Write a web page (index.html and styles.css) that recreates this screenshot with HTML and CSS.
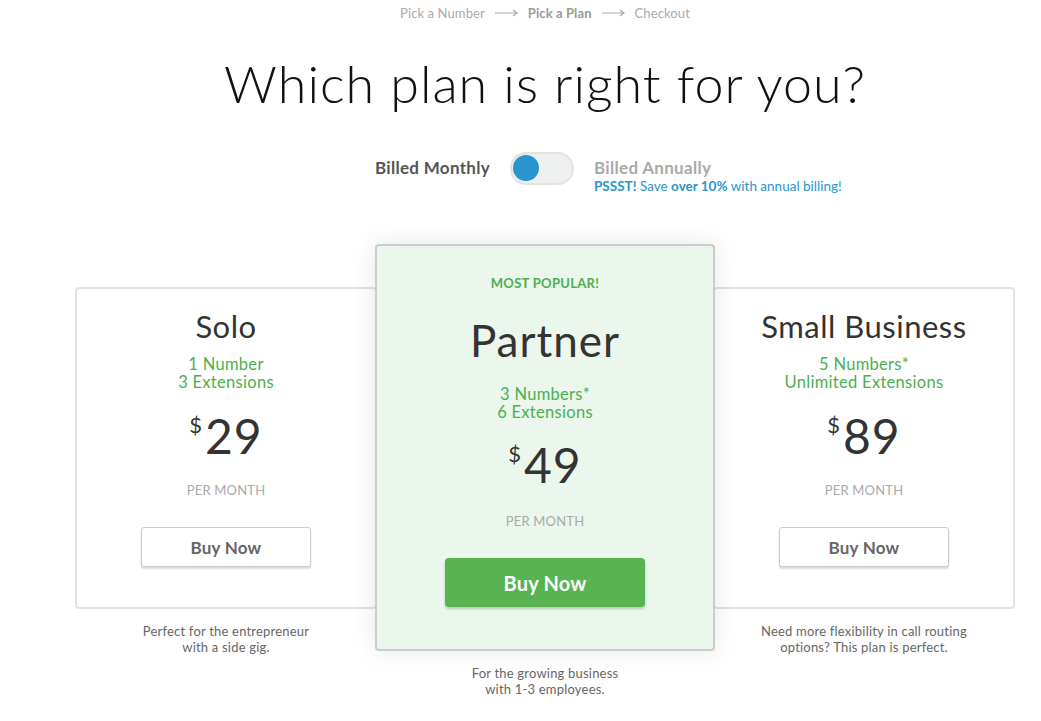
FILE: index.html
```html
<!DOCTYPE html>
<html lang="en">
<head>
  <meta charset="UTF-8">
  <title>Pick a Plan</title>
  <link rel="stylesheet" href="styles.css">
</head>
<body>

  <div class="page">
    <nav class="steps">
      <span>Pick a Number</span>
      <svg class="arrow" width="23" height="8" viewBox="0 0 23 8"><path d="M0 4H22M18 1L22 4L18 7" fill="none" stroke="#aaa" stroke-width="1.2"/></svg>
      <span class="current">Pick a Plan</span>
      <svg class="arrow" width="23" height="8" viewBox="0 0 23 8"><path d="M0 4H22M18 1L22 4L18 7" fill="none" stroke="#aaa" stroke-width="1.2"/></svg>
      <span>Checkout</span>
    </nav>

    <h1>Which plan is right for you?</h1>

    <div class="billing">
      <div class="label on">Billed Monthly</div>
      <div class="switch"><span class="knob"></span></div>
      <div class="annual">
        <div class="label">Billed Annually</div>
        <div class="psst"><b>PSSST!</b> Save <b>over 10%</b> with annual billing!</div>
      </div>
    </div>

    <div class="plans">
      <div class="col side">
        <div class="card">
          <h2>Solo</h2>
          <div class="features">1 Number<br>3 Extensions</div>
          <div class="price"><span class="cur">$</span>29</div>
          <div class="per">PER MONTH</div>
          <button class="buy">Buy Now</button>
        </div>
        <p class="desc">Perfect for the entrepreneur<br>with a side gig.</p>
      </div>

      <div class="col main">
        <div class="card featured">
          <div class="badge">MOST POPULAR!</div>
          <h2>Partner</h2>
          <div class="features">3 Numbers*<br>6 Extensions</div>
          <div class="price"><span class="cur">$</span>49</div>
          <div class="per">PER MONTH</div>
          <button class="buy green">Buy Now</button>
        </div>
        <p class="desc">For the growing business<br>with 1-3 employees.</p>
      </div>

      <div class="col side">
        <div class="card">
          <h2>Small Business</h2>
          <div class="features">5 Numbers*<br>Unlimited Extensions</div>
          <div class="price"><span class="cur">$</span>89</div>
          <div class="per">PER MONTH</div>
          <button class="buy">Buy Now</button>
        </div>
        <p class="desc">Need more flexibility in call routing<br>options? This plan is perfect.</p>
      </div>
    </div>
  </div>

</body>
</html>
```

FILE: styles.css
```css
body { margin: 0; font-family: Lato, "Liberation Sans", sans-serif; color: #333; background: #fff; }
.page { padding-left: 49px; }

.steps { display: flex; justify-content: center; align-items: center; gap: 10px; padding-top: 5px; font-size: 13px; line-height: 16px; letter-spacing: 0.1px; color: #aaa; }
.steps .current { font-weight: 700; color: #999; }
.arrow { display: block; }

h1 { margin: 32px 0 0; text-align: center; font-size: 52px; line-height: 60px; font-weight: 300; letter-spacing: 1px; color: #111; }

.billing { display: grid; grid-template-columns: 1fr auto 1fr; gap: 20px; align-items: start; margin: 39px 0 0 -6px; }
.label { font-size: 17px; line-height: 31px; font-weight: 700; letter-spacing: 0.3px; color: #aaa; }
.label.on { justify-self: end; color: #555; }
.switch { width: 59px; height: 28px; border: 2px solid #e2e4e3; border-radius: 16px; background: #eef0ef; padding: 1px 0 0 1px; box-sizing: content-box; }
.knob { display: block; width: 26px; height: 26px; border-radius: 50%; background: #2a95cd; }
.psst { margin-top: -4px; font-size: 13.5px; line-height: 15px; color: #2a95cd; }

.plans { display: flex; justify-content: center; margin-top: 50px; }
.col { display: flex; flex-direction: column; align-items: center; }
.col.side { width: 302px; padding-top: 43px; }
.col.main { width: 340px; margin: 0 -2px; position: relative; z-index: 1; }

.card { box-sizing: border-box; width: 100%; text-align: center; background: #fff; border: 2px solid #e2e2e2; border-radius: 4px; padding: 20px 0 40px; }
.card h2 { margin: 0; font-size: 31px; line-height: 34px; font-weight: 400; letter-spacing: 0.5px; color: #333; }
.features { margin-top: 12px; font-size: 16.5px; line-height: 18px; letter-spacing: 0.3px; color: #4cb051; }
.price { margin-top: 20px; display: flex; justify-content: center; font-size: 48px; line-height: 50px; letter-spacing: 1px; color: #333; }
.cur { font-size: 22px; line-height: 22px; margin: 3px 2px 0 0; }
.per { margin-top: 21px; font-size: 13px; line-height: 16px; letter-spacing: 0.2px; color: #aaa; }
.buy { margin-top: 29px; width: 170px; height: 40px; font-family: inherit; font-size: 17px; font-weight: 700; letter-spacing: 0.2px; color: #666; background: #fff; border: 1px solid #ccc; border-radius: 3px; box-shadow: 0 2px 2px rgba(0,0,0,0.15); }

.card.featured { background: #ebf6ec; border-color: #ccc; padding: 29px 0 42px; box-shadow: 0 0 24px rgba(0,0,0,0.1); }
.badge { font-size: 13px; line-height: 16px; font-weight: 700; letter-spacing: 0.3px; color: #4cb051; }
.featured h2 { margin-top: 24px; font-size: 44px; line-height: 50px; letter-spacing: 1px; }
.featured .features { margin-top: 20px; }
.featured .price { margin-top: 19px; }
.featured .per { margin-top: 23px; }
.buy.green { width: 200px; height: 49px; font-size: 20px; color: #fff; background: #58b352; border: 0; border-radius: 4px; box-shadow: 0 2px 3px rgba(0,0,0,0.2); }

.desc { margin: 14px 0 0; text-align: center; font-size: 13px; line-height: 16px; letter-spacing: 0.2px; color: #666; }
```
